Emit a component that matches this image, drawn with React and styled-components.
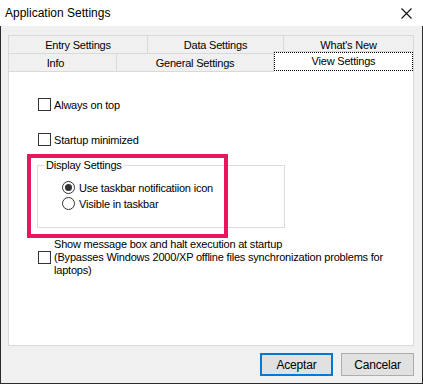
import React from "react";
import styled, { createGlobalStyle } from "styled-components";

const GlobalStyle = createGlobalStyle`
  html, body { margin: 0; padding: 0; background: #fff; }
  body {
    font-family: "Liberation Sans", Arial, sans-serif;
    font-size: 11px;
    letter-spacing: -0.2px;
    color: #000;
  }
  * { box-sizing: border-box; }
`;

const Window = styled.div`
  width: 423px;
  height: 384px;
  display: flex;
  flex-direction: column;
  background: #fff;
`;

const TitleBar = styled.div`
  height: 26px;
  flex: none;
  display: flex;
  align-items: center;
  justify-content: space-between;
  padding: 0 11px 0 5px;
  background: #fff;
`;

const Title = styled.span`
  font-size: 12px;
  letter-spacing: 0;
  line-height: 14px;
`;

const Body = styled.div`
  flex: 1;
  display: flex;
  flex-direction: column;
  background: #f0f0f0;
  border: 1px solid #2b2b2b;
  border-top: none;
  padding: 9px 8px 7px 7px;
`;

const TabRow = styled.div`
  display: flex;
  height: 18px;
`;

const Tab = styled.div`
  width: ${(p) => p.$w}px;
  flex: none;
  display: flex;
  align-items: center;
  justify-content: center;
  border-top: 1px solid #d9d9d9;
  border-left: 1px solid #d9d9d9;
  &:last-child { border-right: 1px solid #d9d9d9; }
  background: #f0f0f0;
  line-height: 14px;
  padding: 1px ${(p) => p.$shift || 0}px 0 0;
  white-space: nowrap;
`;

const ActiveTab = styled.div`
  width: ${(p) => p.$w}px;
  flex: none;
  height: 21px;
  margin-top: -2px;
  margin-bottom: -1px;
  position: relative;
  z-index: 2;
  background: #fff;
  border: 1px solid #d9d9d9;
  border-bottom: none;
  padding: 0 0 1px 0;
  display: flex;
`;

const FocusRect = styled.div`
  flex: 1;
  border: 1px dotted #000;
  display: flex;
  align-items: center;
  justify-content: center;
  line-height: 14px;
  padding-bottom: 1px;
  white-space: nowrap;
`;

const Panel = styled.div`
  position: relative;
  height: 275px;
  flex: none;
  background: #fff;
  border: 1px solid #d9d9d9;
  padding: 26px 0 0 29px;
  display: flex;
  flex-direction: column;
  align-items: flex-start;
`;

const CheckRow = styled.label`
  display: flex;
  align-items: center;
  gap: 3px;
  margin-top: ${(p) => p.$mt || 0}px;
  line-height: 13px;
`;

const Box = styled.span`
  width: 13px;
  height: 13px;
  flex: none;
  border: 1px solid #333;
  background: #fff;
`;

const Label = styled.span`
  white-space: nowrap;
  position: relative;
  top: 1px;
`;

const Group = styled.fieldset`
  margin: 12px 0 0 -1px;
  width: 248px;
  height: 70px;
  border: 1px solid #dcdcdc;
  padding: 7px 0 0 6px;
  min-width: 0;
`;

const Legend = styled.legend`
  padding: 0 2px;
  line-height: 14px;
`;

const RadioList = styled.div`
  display: flex;
  flex-direction: column;
  margin-left: 18px;
`;

const RadioRow = styled.label`
  display: flex;
  align-items: center;
  gap: 4px;
  height: 16px;
  line-height: 16px;
`;

const Radio = styled.span`
  width: 13px;
  height: 13px;
  flex: none;
  border-radius: 50%;
  border: 1px solid #333;
  background: #fff;
  display: flex;
  align-items: center;
  justify-content: center;
  &::after {
    content: "";
    width: 7px;
    height: 7px;
    border-radius: 50%;
    background: ${(p) => (p.$on ? "#333" : "transparent")};
  }
`;

const MultiRow = styled.div`
  display: flex;
  align-items: center;
  gap: 3px;
  margin-top: 10px;
`;

const MultiText = styled.div`
  line-height: 13px;
  white-space: nowrap;
`;

const Highlight = styled.div`
  position: absolute;
  left: 18px;
  top: 82px;
  width: 201px;
  height: 84px;
  border: 4px solid #e6185b;
  pointer-events: none;
`;

const Footer = styled.div`
  display: flex;
  justify-content: flex-end;
  gap: 8px;
  margin-top: 7px;
`;

const Button = styled.button`
  width: 73px;
  height: 23px;
  font: inherit;
  font-size: 12px;
  letter-spacing: -0.2px;
  color: #000;
  background: #e1e1e1;
  border: ${(p) => (p.$primary ? "2px solid #0078d7" : "1px solid #adadad")};
  padding: 0;
  cursor: default;
`;

function CloseIcon() {
  return (
    <svg width="11" height="11" viewBox="0 0 11 11">
      <path d="M0.5 0.5 L10.5 10.5 M10.5 0.5 L0.5 10.5" stroke="#111" strokeWidth="1.1" fill="none" />
    </svg>
  );
}

export default function App() {
  return (
    <>
      <GlobalStyle />
      <Window>
        <TitleBar>
          <Title>Application Settings</Title>
          <CloseIcon />
        </TitleBar>
        <Body>
          <TabRow>
            <Tab $w={139}>Entry Settings</Tab>
            <Tab $w={136}>Data Settings</Tab>
            <Tab $w={131}>What's New</Tab>
          </TabRow>
          <TabRow>
            <Tab $w={108} $shift={14}>Info</Tab>
            <Tab $w={157}>General Settings</Tab>
            <ActiveTab $w={141}>
              <FocusRect>View Settings</FocusRect>
            </ActiveTab>
          </TabRow>
          <Panel>
            <CheckRow>
              <Box />
              <Label>Always on top</Label>
            </CheckRow>
            <CheckRow $mt={22}>
              <Box />
              <Label>Startup minimized</Label>
            </CheckRow>
            <Group>
              <Legend>Display Settings</Legend>
              <RadioList>
                <RadioRow>
                  <Radio $on />
                  <Label>Use taskbar notificatiion icon</Label>
                </RadioRow>
                <RadioRow>
                  <Radio />
                  <Label>Visible in taskbar</Label>
                </RadioRow>
              </RadioList>
            </Group>
            <MultiRow>
              <Box />
              <MultiText>
                Show message box and halt execution at startup
                <br />
                (Bypasses Windows 2000/XP offline files synchronization problems for
                <br />
                laptops)
              </MultiText>
            </MultiRow>
            <Highlight />
          </Panel>
          <Footer>
            <Button $primary>Aceptar</Button>
            <Button>Cancelar</Button>
          </Footer>
        </Body>
      </Window>
    </>
  );
}
